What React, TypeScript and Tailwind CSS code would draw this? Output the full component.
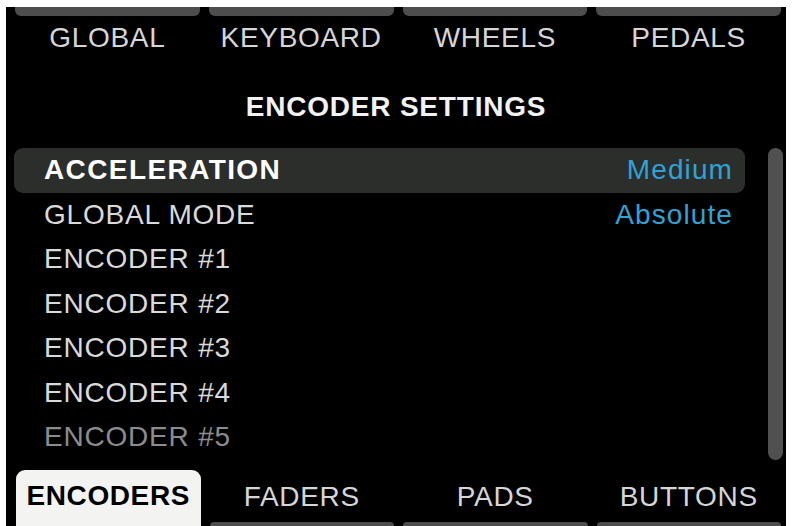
const topTabs = ["GLOBAL", "KEYBOARD", "WHEELS", "PEDALS"];
const bottomTabs = ["ENCODERS", "FADERS", "PADS", "BUTTONS"];

const rows = [
  { label: "ACCELERATION", value: "Medium", active: true },
  { label: "GLOBAL MODE", value: "Absolute" },
  { label: "ENCODER #1" },
  { label: "ENCODER #2" },
  { label: "ENCODER #3" },
  { label: "ENCODER #4" },
  { label: "ENCODER #5", dim: true },
];

export default function App() {
  return (
    <div className="w-[793px] h-[526px] bg-white pl-[6px] pt-[7px] overflow-hidden font-['Liberation_Sans',Arial,sans-serif]">
      <div className="w-[780px] h-[519px] bg-black flex flex-col">
        {/* top tab strip */}
        <div className="grid grid-cols-4 gap-[9px] pl-[9px] pr-[5px] h-[9px]">
          {topTabs.map((t) => (
            <div key={t} className="bg-[#4d4d4d] rounded-b-[6px]" />
          ))}
        </div>
        <div className="grid grid-cols-4 gap-[9px] pl-[9px] pr-[5px] h-[44px]">
          {topTabs.map((t) => (
            <div key={t} className="flex items-center justify-center text-[28px] tracking-[0.7px] text-[#d6d6d6] leading-none">
              {t}
            </div>
          ))}
        </div>

        <div className="h-[88px] pt-[6px] flex items-center justify-center text-[28px] font-bold tracking-[0.8px] text-[#f2f2f2] leading-none">
          ENCODER SETTINGS
        </div>

        {/* list + scrollbar */}
        <div className="flex h-[312px] pl-[8px] pr-[3px]">
          <div className="flex-1 flex flex-col">
            {rows.map((r) => (
              <div
                key={r.label}
                className={`h-[44.5px] shrink-0 flex items-center justify-between pl-[30px] pr-[12px] rounded-[9px] text-[28px] leading-none ${
                  r.active
                    ? "bg-[#2c2e2c] font-bold text-white tracking-[1.4px]"
                    : r.dim
                      ? "text-[#8c8c8c] tracking-[0.8px]"
                      : "text-[#dadada] tracking-[0.8px]"
                }`}
              >
                <span>{r.label}</span>
                {r.value && <span className="font-normal tracking-[1.1px] text-[#2fa3d6]">{r.value}</span>}
              </div>
            ))}
          </div>
          <div className="w-[15px] ml-[23px] h-[312px] rounded-full bg-[#505050]" />
        </div>

        {/* bottom tabs */}
        <div className="mt-auto grid grid-cols-4 gap-[9px] pl-[10px] pr-[5px] h-[56px]">
          {bottomTabs.map((t, i) =>
            i === 0 ? (
              <div key={t} className="bg-[#f3f4f2] rounded-t-[9px] flex items-center justify-center text-[28px] font-bold tracking-[0.6px] text-black leading-none pb-[4px]">
                {t}
              </div>
            ) : (
              <div key={t} className="flex flex-col">
                <div className="flex-1 flex items-center justify-center text-[28px] tracking-[0.7px] text-[#d6d6d6] leading-none pt-[2px]">
                  {t}
                </div>
                <div className="h-[4px] bg-[#4d4d4d] rounded-t-[4px]" />
              </div>
            )
          )}
        </div>
      </div>
    </div>
  );
}
